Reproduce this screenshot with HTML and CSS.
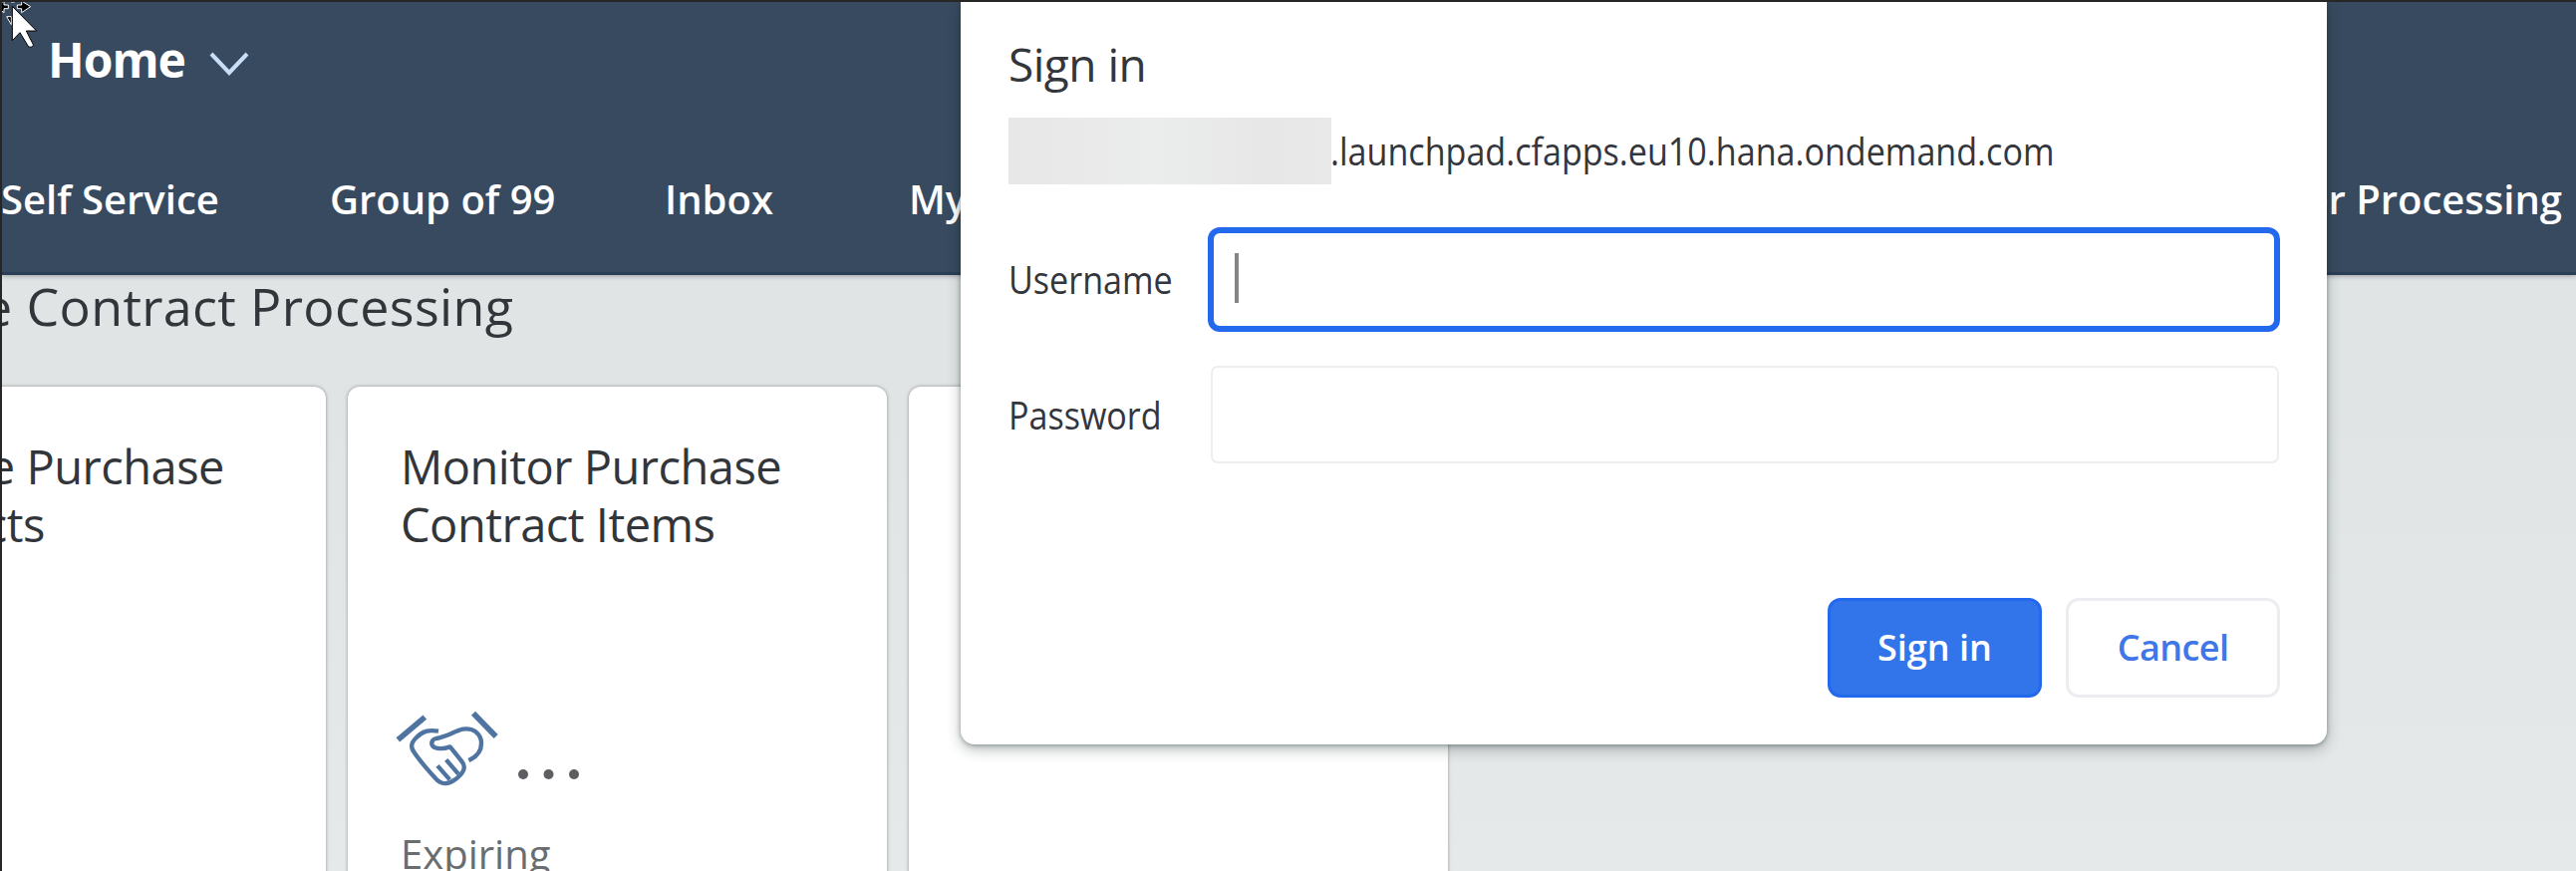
FILE: index.html
```
<!DOCTYPE html>
<html lang="en">
<head>
<meta charset="utf-8">
<title>Home</title>
<link rel="stylesheet" href="styles.css">
</head>
<body>
<div class="screen">
  <header class="shell">
    <div class="shell-title">Home
      <svg class="chevron" viewBox="0 0 40 26"><path d="M2 3 20 22 38 3"/></svg>
    </div>
    <nav class="tabs">
      <span class="tab">Self Service</span>
      <span class="tab">Group of 99</span>
      <span class="tab">Inbox</span>
      <span class="tab">My</span>
      <span class="tab tab-last">er Processing</span>
    </nav>
  </header>
  <main class="content">
    <h2 class="group-title">e Contract Processing</h2>
    <div class="tiles">
      <section class="tile tile-first">
        <h3 class="tile-title"><span class="lead">e Purchase</span><br><span class="lead-short">cts</span></h3>
      </section>
      <section class="tile">
        <h3 class="tile-title">Monitor Purchase<br>Contract Items</h3>
        <div class="tile-value">
          <svg class="handshake" viewBox="48 36 318 234">
            <path class="cuff" d="M58 127 139 59M285 47 353 117"/>
            <path d="M180 101C150 96 132 101 113 121C94 140 97 152 109 168C128 196 150 220 170 242C188 264 210 262 230 247C252 230 266 212 251 193L215 148C195 155 178 154 168 150C155 143 158 126 173 123C205 118 226 102 253 95C286 90 303 108 308 127C313 157 298 177 271 189"/>
            <path d="M177 205 214 247M203 187 240 230"/>
          </svg>
          <svg class="dots" viewBox="0 0 62 12"><circle cx="6" cy="6" r="5"/><circle cx="31.500" cy="6" r="5"/><circle cx="57" cy="6" r="5"/></svg>
        </div>
        <div class="tile-footer">Expiring</div>
      </section>
      <section class="tile"></section>
    </div>
  </main>
  <form class="dialog">
    <h1 class="dialog-title">Sign in</h1>
    <div class="host"><span class="redacted"></span><span class="squeeze">.launchpad.cfapps.eu10.hana.ondemand.com</span></div>
    <div class="field">
      <label class="squeeze">Username</label>
      <div class="input input-focus"><span class="caret"></span></div>
    </div>
    <div class="field field-password">
      <label class="squeeze">Password</label>
      <div class="input"></div>
    </div>
    <div class="actions">
      <button class="btn btn-primary" type="button">Sign in</button>
      <button class="btn" type="button">Cancel</button>
    </div>
  </form>
  <svg class="cursor" viewBox="0 0 120 150">
    <g class="move"><path d="M52 15H65V3L92 20 65 38V26H52ZM25 15H12V3L-15 20 12 38V26H25ZM33 -6H44V6H33ZM20 50H34V74Z"/></g>
    <path class="arrow" d="M37 19V122L60 98 86 141Q94 145 101 136L79 93H110Z"/>
  </svg>
</div>
</body>
</html>
```
FILE: styles.css
```
* { box-sizing: border-box; }
body { margin: 0; font-family: "Open Sans", "Noto Sans", sans-serif; }
h1, h2, h3 { margin: 0; font-weight: 400; }

.screen {
  position: relative;
  width: 2585px;
  height: 874px;
  overflow: hidden;
  border-top: 2px solid #262626;
  border-left: 2px solid #262626;
  background: linear-gradient(#e1e5e6 0, #e0e4e5 45%, #e6e9ea 100%);
}

.shell {
  height: 274px;
  padding-top: 28px;
  background: #384a5f;
  border-bottom: 3px solid #2b3e55;
  box-shadow: 0 1px 5px rgba(0, 0, 0, .3);
  color: #fff;
}
.shell-title {
  display: flex;
  align-items: center;
  gap: 24px;
  height: 60px;
  padding-left: 46px;
  font-size: 48px;
  font-weight: 700;
  letter-spacing: -1px;
  line-height: 60px;
}
.chevron { width: 40px; height: 26px; margin-top: 8px; fill: none; stroke: #c9def7; stroke-width: 4; }
.tabs {
  display: grid;
  grid-template-columns: 330px 336px 245px 160px 1fr;
  margin: 85px 0 0 -1px;
  font-size: 40px;
  font-weight: 600;
  line-height: 50px;
}
.tab { white-space: nowrap; }
.tab-last { text-align: right; padding-right: 14px; }

.group-title {
  height: 64px;
  margin: -1px 0 0 -19px;
  font-size: 52px;
  letter-spacing: .35px;
  line-height: 64px;
  white-space: nowrap;
  color: #32363a;
}
.tiles { display: flex; gap: 22px; margin: 49px 0 0 -216px; }
.tile {
  flex: none;
  width: 541px;
  height: 560px;
  padding: 52px 0 0 53px;
  border-radius: 12px;
  background: #fff;
  box-shadow: 0 0 3px 1px rgba(0, 0, 0, .22);
}
.tile-first { text-align: right; }
.tile-title {
  height: 272px;
  font-size: 47px;
  line-height: 57.5px;
  letter-spacing: -.5px;
  color: #32363a;
}
.lead { padding-right: 102px; }
.lead-short { padding-right: 282px; }
.tile-value { display: flex; height: 78px; margin-left: -6px; }
.handshake { width: 106px; height: 78px; fill: none; stroke: #4f74a1; stroke-width: 13; stroke-linejoin: round; }
.cuff { stroke-width: 17; }
.dots { width: 62px; height: 12px; margin: 59px 0 0 17px; fill: #5c5e61; }
.tile-footer { margin-top: 42px; font-size: 40px; line-height: 50px; color: #6a6d70; }

.dialog {
  position: absolute;
  top: 0;
  left: 962px;
  width: 1371px;
  height: 745px;
  padding: 32px 47px 0 48px;
  border-radius: 0 0 14px 14px;
  background: #fff;
  box-shadow: 0 5px 14px rgba(20, 35, 35, .3), 0 1px 4px rgba(20, 35, 35, .35);
  color: #33363c;
  font-size: 37.5px;
}
.dialog-title { height: 60px; font-size: 46px; letter-spacing: -.5px; line-height: 60px; }
.squeeze { transform: scaleX(.909); transform-origin: left; white-space: nowrap; }
.host { display: flex; height: 67px; margin-top: 24px; line-height: 68px; }
.host .squeeze { margin-left: -1px; }
.redacted { flex: none; width: 324px; background: linear-gradient(90deg, #e8e7e7, #ebecec 45%, #e7e7e7 80%, #e9e9e9); }
.field { display: grid; grid-template-columns: 200px 1fr; align-items: center; margin-top: 43px; }
.field-password { grid-template-columns: 203px 1fr; margin: 34px 1px 0 0; }
.input { height: 98px; border: 2px solid #eceef0; border-radius: 7px; }
.input-focus { display: flex; align-items: center; height: 105px; padding-left: 21px; border: 6px solid #2369ee; border-radius: 12px; }
.caret { width: 4px; height: 50px; margin-top: -4px; background: #858585; }
.actions { display: flex; justify-content: flex-end; gap: 24px; margin-top: 135px; }
.btn {
  width: 215px;
  height: 100px;
  padding: 0 0 1px;
  border: 3px solid #ecedf0;
  border-radius: 13px;
  background: #fff;
  color: #3f76e8;
  font: 600 36px "Open Sans", "Noto Sans", sans-serif;
  letter-spacing: -.6px;
}
.btn-primary { border-color: #2369ee; background: #3274ea; color: #fff; letter-spacing: 0; }

.cursor { position: absolute; top: -2px; left: -2px; width: 40px; height: 50px; }
.move { fill: #000; stroke: #fff; stroke-width: 3; }
.arrow { fill: #fff; stroke: #000; stroke-width: 3; }
```
